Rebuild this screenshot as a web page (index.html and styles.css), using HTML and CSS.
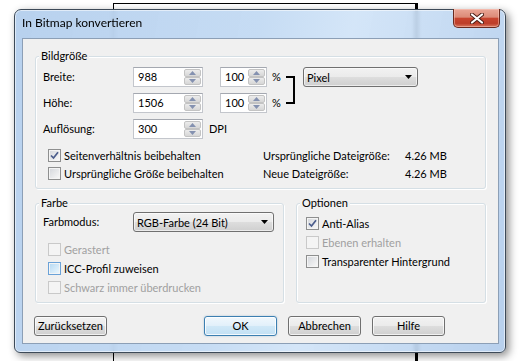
FILE: index.html
```html
<!DOCTYPE html>
<html lang="de">
<head>
    <meta charset="UTF-8">
    <title>In Bitmap konvertieren</title>
    <link rel="stylesheet" href="styles.css">
</head>
<body>
    <div class="backdrop"></div>

    <div class="window">
        <div class="titlebar">
            <span class="title">In Bitmap konvertieren</span>
            <button class="close-btn" title="Schließen">
                <svg width="14" height="11" viewBox="0 0 14 11">
                    <path d="M2 1.5 L12 9.5 M12 1.5 L2 9.5" stroke="#4a1c14" stroke-width="4" stroke-linecap="round"/>
                    <path d="M2 1.5 L12 9.5 M12 1.5 L2 9.5" stroke="#fff" stroke-width="2.2" stroke-linecap="round"/>
                </svg>
            </button>
        </div>

        <div class="client">
            <!-- Bildgröße -->
            <div class="group group-size">
                <span class="group-title">Bildgröße</span>
                <div class="size-grid">
                    <span class="lbl">Breite:</span>
                    <div class="spin spin-wide">
                        <span class="spin-value">988</span>
                        <span class="spin-btns">
                            <span class="spin-up"><svg width="7" height="4"><path d="M0 4L3.5 0L7 4Z"/></svg></span>
                            <span class="spin-down"><svg width="7" height="4"><path d="M0 0L3.5 4L7 0Z"/></svg></span>
                        </span>
                    </div>
                    <div class="spin spin-narrow">
                        <span class="spin-value">100</span>
                        <span class="spin-btns">
                            <span class="spin-up"><svg width="7" height="4"><path d="M0 4L3.5 0L7 4Z"/></svg></span>
                            <span class="spin-down"><svg width="7" height="4"><path d="M0 0L3.5 4L7 0Z"/></svg></span>
                        </span>
                    </div>
                    <span class="unit">%</span>
                    <span class="bracket"></span>
                    <div class="combo combo-unit">
                        <span>Pixel</span>
                        <svg width="7" height="4"><path d="M0 0L3.5 4L7 0Z"/></svg>
                    </div>

                    <span class="lbl">Höhe:</span>
                    <div class="spin spin-wide">
                        <span class="spin-value">1506</span>
                        <span class="spin-btns">
                            <span class="spin-up"><svg width="7" height="4"><path d="M0 4L3.5 0L7 4Z"/></svg></span>
                            <span class="spin-down"><svg width="7" height="4"><path d="M0 0L3.5 4L7 0Z"/></svg></span>
                        </span>
                    </div>
                    <div class="spin spin-narrow">
                        <span class="spin-value">100</span>
                        <span class="spin-btns">
                            <span class="spin-up"><svg width="7" height="4"><path d="M0 4L3.5 0L7 4Z"/></svg></span>
                            <span class="spin-down"><svg width="7" height="4"><path d="M0 0L3.5 4L7 0Z"/></svg></span>
                        </span>
                    </div>
                    <span class="unit">%</span>

                    <span class="lbl">Auflösung:</span>
                    <div class="spin spin-wide">
                        <span class="spin-value">300</span>
                        <span class="spin-btns">
                            <span class="spin-up"><svg width="7" height="4"><path d="M0 4L3.5 0L7 4Z"/></svg></span>
                            <span class="spin-down"><svg width="7" height="4"><path d="M0 0L3.5 4L7 0Z"/></svg></span>
                        </span>
                    </div>
                    <span class="dpi">DPI</span>
                </div>

                <div class="size-bottom">
                    <div class="size-checks">
                        <label class="check-row">
                            <span class="cb checked"><svg width="9" height="9" viewBox="0 0 9 9"><path d="M1 4.5L3.5 7L8 1.2" fill="none" stroke="#4b5d8c" stroke-width="1.7"/></svg></span>
                            Seitenverhältnis beibehalten
                        </label>
                        <label class="check-row">
                            <span class="cb"></span>
                            Ursprüngliche Größe beibehalten
                        </label>
                    </div>
                    <div class="info">
                        <span>Ursprüngliche Dateigröße:</span>
                        <span>4.26 MB</span>
                        <span>Neue Dateigröße:</span>
                        <span>4.26 MB</span>
                    </div>
                </div>
            </div>

            <div class="group-row">
                <!-- Farbe -->
                <div class="group group-color">
                    <span class="group-title">Farbe</span>
                    <div class="mode-row">
                        <span class="lbl">Farbmodus:</span>
                        <div class="combo combo-mode">
                            <span>RGB-Farbe (24 Bit)</span>
                            <svg width="7" height="4"><path d="M0 0L3.5 4L7 0Z"/></svg>
                        </div>
                    </div>
                    <div class="color-checks">
                        <label class="check-row disabled"><span class="cb"></span>Gerastert</label>
                        <label class="check-row"><span class="cb hot"></span>ICC-Profil zuweisen</label>
                        <label class="check-row disabled"><span class="cb"></span>Schwarz immer überdrucken</label>
                    </div>
                </div>

                <!-- Optionen -->
                <div class="group group-options">
                    <span class="group-title">Optionen</span>
                    <label class="check-row">
                        <span class="cb checked"><svg width="9" height="9" viewBox="0 0 9 9"><path d="M1 4.5L3.5 7L8 1.2" fill="none" stroke="#4b5d8c" stroke-width="1.7"/></svg></span>
                        Anti-Alias
                    </label>
                    <label class="check-row disabled"><span class="cb"></span>Ebenen erhalten</label>
                    <label class="check-row"><span class="cb"></span>Transparenter Hintergrund</label>
                </div>
            </div>

            <div class="button-row">
                <button class="btn btn-reset">Zurücksetzen</button>
                <button class="btn btn-default">OK</button>
                <button class="btn">Abbrechen</button>
                <button class="btn">Hilfe</button>
            </div>
        </div>
    </div>
</body>
</html>
```

FILE: styles.css
```css
* {
    margin: 0;
    padding: 0;
    box-sizing: border-box;
}

html,
body {
    overflow: hidden;
}

body {
    width: 519px;
    height: 361px;
    position: relative;
    background: #fff;
    font-family: Lato, "Noto Sans", sans-serif;
    font-size: 11px;
    color: #000;
    white-space: nowrap;
}

/* window lying behind the dialog */
.backdrop {
    position: absolute;
    left: 113px;
    top: 3px;
    width: 305px;
    height: 358px;
    border: 1px solid #000;
    border-right-width: 3px;
    border-bottom: none;
}

.window {
    position: absolute;
    left: 14px;
    top: 9px;
    width: 492px;
    height: 344px;
    display: flex;
    flex-direction: column;
    padding: 0 6px 8px 7px;
    border: 1px solid #3d4a58;
    border-radius: 7px 7px 6px 6px;
    background: linear-gradient(100deg, rgba(176, 204, 236, 0.9) 0%, rgba(190, 215, 242, 0.88) 45%, rgba(206, 226, 247, 0.88) 62%, rgba(176, 203, 235, 0.9) 100%);
    backdrop-filter: blur(2px);
    box-shadow: inset 0 0 0 1px rgba(255, 255, 255, 0.55), 3px 3px 9px rgba(0, 0, 0, 0.45);
}

.titlebar {
    flex: none;
    height: 28px;
    display: flex;
    justify-content: space-between;
    align-items: flex-start;
}

.title {
    padding-top: 5px;
    line-height: 16px;
    font-size: 12px;
}

.close-btn {
    width: 47px;
    height: 19px;
    margin-top: -1px;
    margin-right: -1px;
    display: flex;
    align-items: center;
    justify-content: center;
    border: 1px solid #6a2a1f;
    border-top: none;
    border-radius: 0 0 5px 5px;
    background: linear-gradient(#eaa797 0%, #dc8b78 45%, #c8452f 52%, #bd3e2a 80%, #d8785f 100%);
    box-shadow: inset 0 0 0 1px rgba(255, 210, 200, 0.45);
}

.client {
    flex: 1;
    display: flex;
    flex-direction: column;
    padding: 17px 12px 0 12px;
    background: #f0f0f0;
    border: 1px solid #8c9fb6;
}

/* group boxes */
.group {
    position: relative;
    border: 1px solid #d5dfe5;
    border-radius: 3px;
    box-shadow: inset 1px 1px 0 #fff, 1px 1px 0 #fff;
}

.group-title {
    position: absolute;
    top: -9px;
    left: 3px;
    padding: 0 2px;
    line-height: 16px;
    background: #f0f0f0;
}

.group-size {
    padding: 10px 7px 6px 7px;
}

.size-grid {
    display: grid;
    grid-template-columns: 90px 70px 17px 47px 19px 17px 115px;
    grid-auto-rows: 20px;
    row-gap: 6px;
}

.lbl {
    line-height: 20px;
}

.size-grid .lbl { grid-column: 1; }
.spin-wide { grid-column: 2; }
.spin-narrow { grid-column: 4; }

.unit {
    grid-column: 5;
    padding-left: 5px;
    line-height: 20px;
}

.bracket {
    grid-column: 6;
    grid-row: 1 / span 2;
    width: 9px;
    margin: 9px 0;
    border: 2px solid #000;
    border-left: none;
}

.combo-unit { grid-column: 7; }

.dpi {
    grid-column: 3 / span 3;
    padding-left: 6px;
    line-height: 20px;
}

/* spin box */
.spin {
    display: flex;
    background: #fff;
    border: 1px solid #c3c6cc;
    border-top-color: #a4a8b0;
}

.spin-value {
    flex: 1;
    padding-left: 4px;
    line-height: 18px;
}

.spin-btns {
    width: 18px;
    display: flex;
    flex-direction: column;
    padding: 1px 1px 1px 0;
}

.spin-up,
.spin-down {
    flex: 1;
    display: flex;
    align-items: center;
    justify-content: center;
    background: linear-gradient(#ececec, #d6d6d6);
    border: 1px solid #c3c3c3;
    border-radius: 2px;
}

.spin-up svg,
.spin-down svg {
    fill: #8491b0;
}

/* drop-down */
.combo {
    height: 20px;
    display: flex;
    align-items: center;
    justify-content: space-between;
    padding: 0 5px 0 3px;
    border: 1px solid #707070;
    border-radius: 3px;
    background: linear-gradient(#f2f2f2 0%, #ebebeb 48%, #dddddd 52%, #cfcfcf 100%);
    box-shadow: inset 0 0 0 1px rgba(255, 255, 255, 0.6);
}

.combo svg {
    fill: #000;
}

/* check boxes */
.check-row {
    display: flex;
    align-items: center;
    gap: 3px;
    height: 18px;
}

.check-row.disabled {
    color: #a0a0a0;
}

.cb {
    flex: none;
    width: 13px;
    height: 13px;
    display: flex;
    align-items: center;
    justify-content: center;
    border: 1px solid #8e8f8f;
    background: linear-gradient(135deg, #d3d6db 0%, #f6f6f6 90%);
    box-shadow: inset 0 0 0 1px #f4f4f4;
}

.check-row.disabled .cb {
    border-color: #c9c9c9;
    background: #f4f4f4;
    box-shadow: none;
}

.cb.hot {
    border-color: #6aa2d8;
    background: linear-gradient(135deg, #b4d8f2 0%, #e8f5fd 90%);
}

.size-bottom {
    display: flex;
    margin-top: 7px;
}

.size-checks {
    width: 220px;
    padding-left: 5px;
}

.info {
    display: grid;
    grid-template-columns: 142px auto;
    grid-auto-rows: 18px;
    align-items: center;
}

.group-row {
    display: flex;
    gap: 12px;
    margin-top: 14px;
}

.group-color {
    width: 249px;
    padding: 8px 7px 5px 7px;
}

.mode-row {
    display: flex;
}

.mode-row .lbl {
    width: 90px;
}

.combo-mode {
    width: 141px;
}

.color-checks {
    margin-top: 8px;
    padding-left: 5px;
}

.color-checks .check-row,
.group-options .check-row {
    height: 19px;
}

.group-options {
    flex: 1;
    padding: 10px 9px 0 9px;
}

/* buttons */
.button-row {
    display: flex;
    gap: 11px;
    margin-top: 13px;
    margin-left: -1px;
}

.btn {
    width: 73px;
    height: 20px;
    padding: 0;
    font: inherit;
    color: #000;
    line-height: 18px;
    text-align: center;
    border: 1px solid #707070;
    border-radius: 3px;
    background: linear-gradient(#f2f2f2 0%, #ebebeb 48%, #dddddd 52%, #cfcfcf 100%);
    box-shadow: inset 0 0 0 1px rgba(255, 255, 255, 0.7);
}

.btn-default {
    margin-left: auto;
    border-color: #3c7fb1;
    background: linear-gradient(#f1f8fd 0%, #e2f0fa 48%, #d0e8f7 52%, #c2e0f4 100%);
    box-shadow: inset 0 0 0 1px rgba(255, 255, 255, 0.8), 0 0 2px rgba(60, 127, 177, 0.4);
}

.button-row .btn:last-child {
    margin-right: 41px;
}
```
